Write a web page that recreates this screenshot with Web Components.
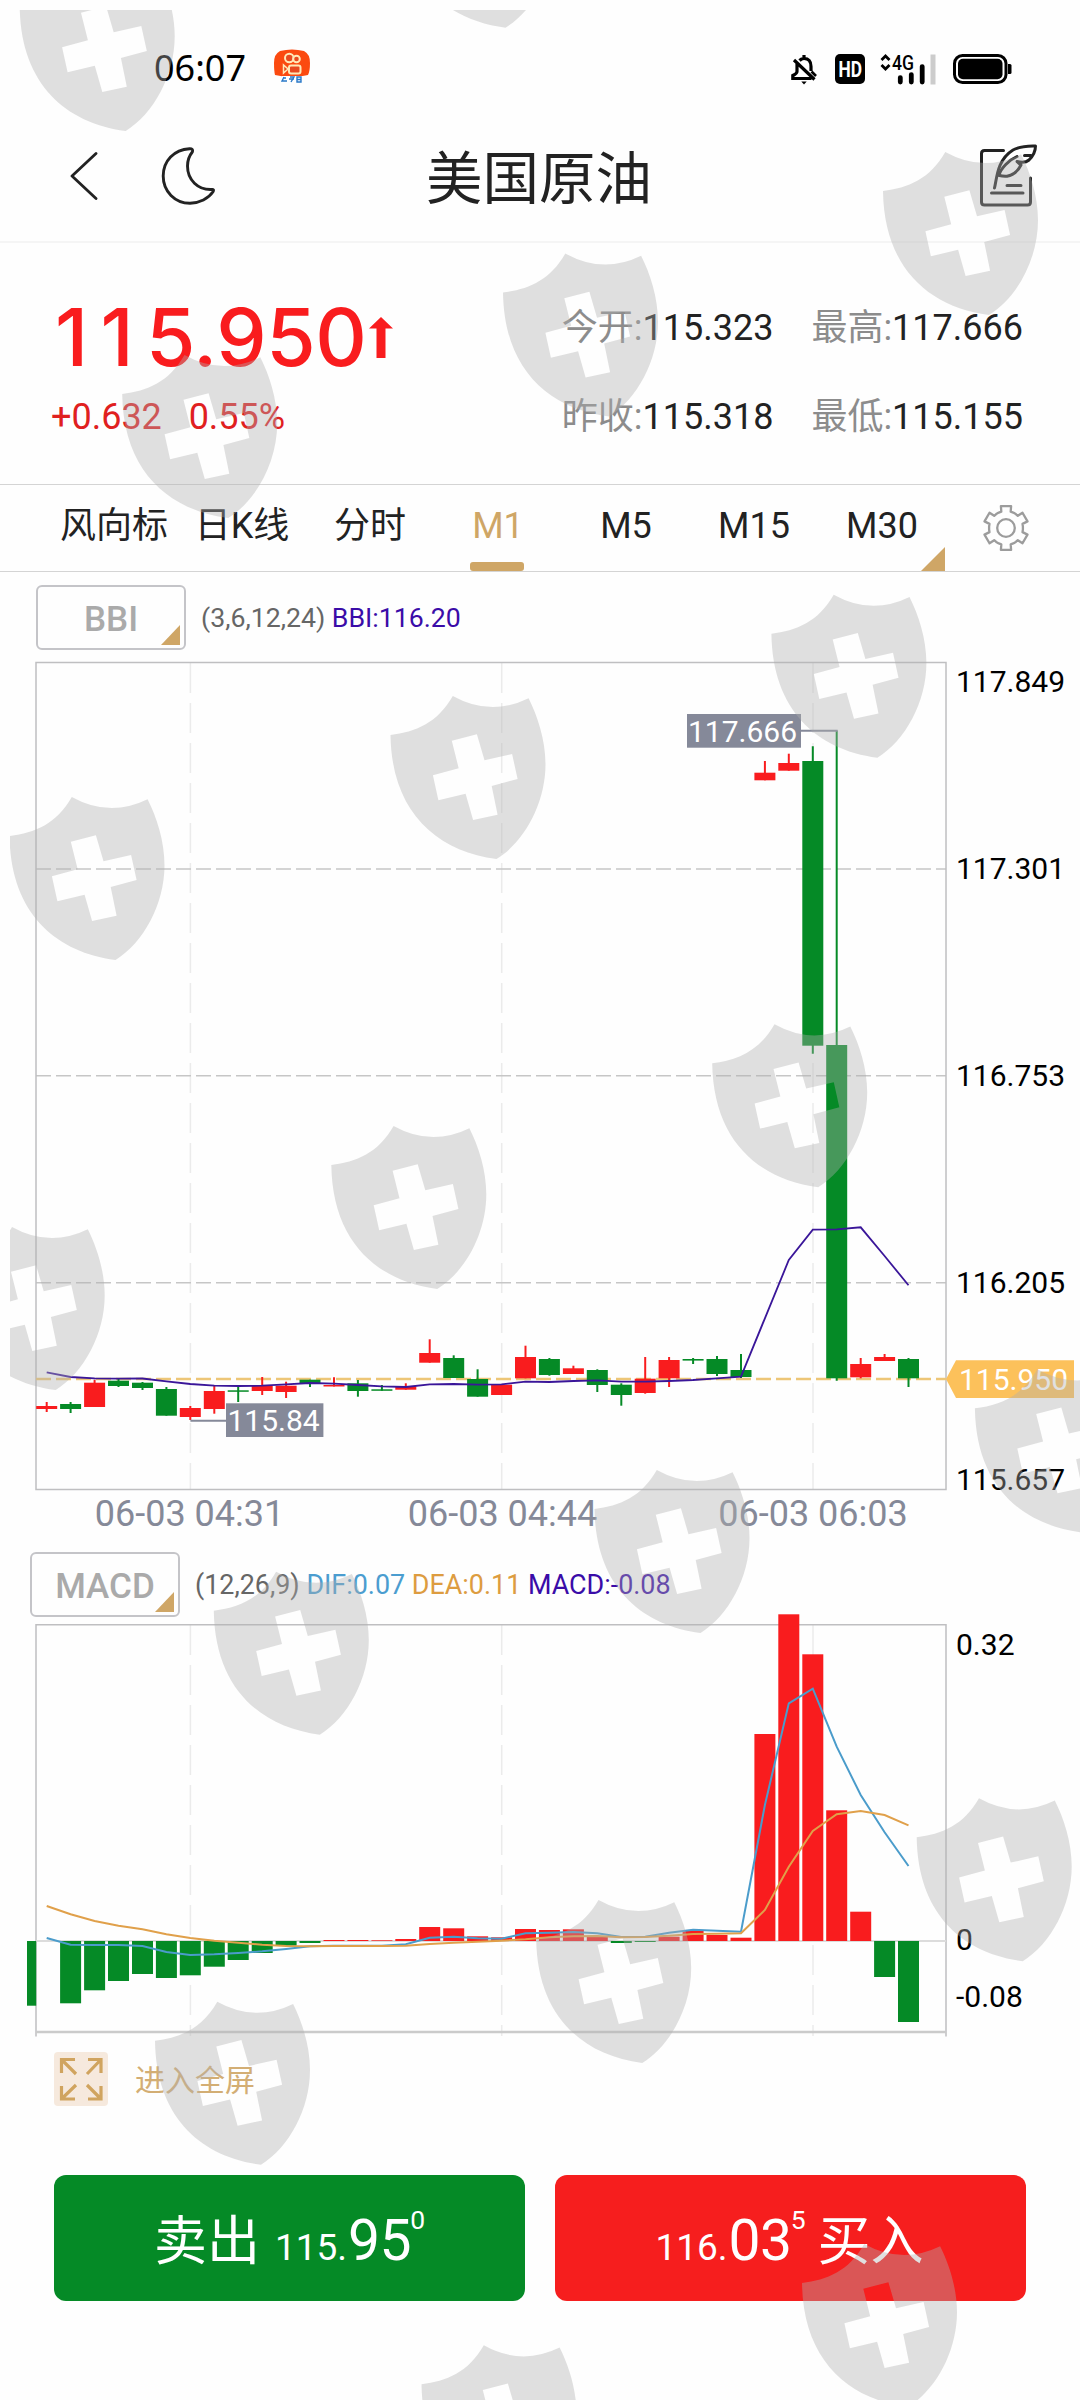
<!DOCTYPE html>
<html lang="zh-CN">
<head>
<meta charset="utf-8">
<title>美国原油</title>
<style>
    body{
        margin: 0;
        background: #fefefe;
        font-family: Roboto, "Noto Sans CJK SC", sans-serif;
        color: #222;
    }
</style>
</head>
<body>
<quote-app></quote-app>

<script>
/**
 * Shared colors of the quote screen.
 */
const RED = '#f91c1e';
const GREEN = '#058a26';
const GOLD = '#cfa666';

/** Horizontal step between two candles and center of the first one. */
const STEP = 23.94;
const FIRST = 46.7;

/**
 * Turns a list of y values into svg polyline points.
 *
 * @param {number[]} values
 * @returns {string}
 */
const toPoints = (values) => values.map((y, i) => `${(FIRST + i * STEP).toFixed(1)},${y}`).join(' ');

/**
 * Phone status bar.
 *
 * @customElement
 */
class StatusBar extends HTMLElement{
    constructor(){
        super();
        this.attachShadow({mode: 'open'});
    }

    connectedCallback(){
        this.shadowRoot.innerHTML = `
            <style>
                :host{
                    display: flex;
                    align-items: center;
                    height: 94px;
                    padding: 22px 67px 0 154px;
                    color: #000;
                }
                .time{
                    font: 36px/44px "Noto Sans", sans-serif;
                    margin-top: -3px;
                }
                .app{
                    margin: -4px auto 0 27px;
                }
                .bell{ margin-right: 18px; }
                .hd{ margin-right: 15px; }
                .net{ margin-right: 16px; }
                svg{
                    display: block;
                    overflow: visible;
                    font-family: Roboto, sans-serif;
                }
            </style>
            <span class="time">06:07</span>
            <svg class="app" width="38" height="36" viewBox="0 0 38 36">
                <path d="M7 2Q19-1 31 2Q37 5 37 14Q37 22 35 26Q19 30 2 26Q1 22 1 14Q1 5 7 2z" fill="#fb4a10"/>
                <circle cx="16.300" cy="9" r="4.300" fill="#e84a20" stroke="#ffe9b8" stroke-width="2"/>
                <circle cx="23.500" cy="10" r="3.300" fill="#e84a20" stroke="#ffe9b8" stroke-width="2"/>
                <rect x="16" y="16.500" width="11.500" height="8" rx="2" fill="#e84a20" stroke="#ffe9b8" stroke-width="2"/>
                <path d="M10.500 16v8l4.500-4z" fill="#e84a20" stroke="#ffe9b8" stroke-width="1.500"/>
                <path d="M9 27h20v6H9z" fill="#fff"/>
                <path d="M11 28l-2 4h5M10 29h3M17 28h4l-3 5M16 30h5M24 28v5h4v-5zM24 30.500h4" fill="none" stroke="#2878c8" stroke-width="1.400"/>
            </svg>
            <svg class="bell" width="26" height="31" viewBox="0 0 26 31" fill="none" stroke="#000" stroke-width="3.200">
                <path d="M6 9.500V17.500Q6 19.500 1.800 21.500V24.500H20.500M8.500 6.500Q10.500 4.500 13 4.500Q20 4.500 20 12.500V17M13 1V5M3 6L23.500 25.500"/>
                <path d="M10.300 27.500h5.400l-2.700 3z" fill="#000" stroke="none"/>
                <path d="M20.500 17.500L25 22" stroke-width="2.600"/>
            </svg>
            <svg class="hd" width="30" height="30" viewBox="0 0 30 30">
                <rect width="30" height="30" rx="5" fill="#000"/>
                <text x="3.500" y="23.200" fill="#fff" font-size="22.500" font-weight="700" textLength="23.500" lengthAdjust="spacingAndGlyphs">HD</text>
            </svg>
            <svg class="net" width="57" height="31" viewBox="0 0 57 31">
                <path d="M1.500 6L5.500 2L9.500 6M1.500 11L5.500 15L9.500 11" fill="none" stroke="#000" stroke-width="2.800"/>
                <text x="12" y="15.500" font-size="19.500" font-weight="500" textLength="22" lengthAdjust="spacingAndGlyphs">4G</text>
                <path d="M20.300 23.600V28M31.300 20.600V28M42.200 12.600V28" stroke="#000" stroke-width="4.800" stroke-linecap="round"/>
                <path d="M53 .5V30.500" stroke="#ccc" stroke-width="5"/>
            </svg>
            <svg width="60" height="30" viewBox="0 0 60 30">
                <rect x="1.500" y="1.500" width="51.500" height="27" rx="8" fill="none" stroke="#000" stroke-width="3"/>
                <rect x="5" y="4.800" width="44.500" height="20.400" rx="5" fill="#000"/>
                <path d="M55 10h2q1.500 0 1.500 1.500v7q0 1.500-1.500 1.500h-2z" fill="#000"/>
            </svg>
        `;
    }
}

customElements.define('status-bar', StatusBar)

/**
 * Navigation header. The title comes in through the slot.
 *
 * @customElement
 */
class NavHeader extends HTMLElement{
    constructor(){
        super();
        this.attachShadow({mode: 'open'});
    }

    connectedCallback(){
        this.shadowRoot.innerHTML = `
            <style>
                :host{
                    display: grid;
                    grid-template-columns: 1fr auto 1fr;
                    align-items: center;
                    height: 120px;
                    padding: 0 43px 5px 70px;
                    border-bottom: 2px solid #f5f5f5;
                }
                .left{
                    display: flex;
                    align-items: center;
                    gap: 63px;
                }
                h1{
                    margin: 8px 0 0 -29px;
                    font-size: 56.5px;
                    font-weight: 400;
                    line-height: 64px;
                }
                .edit{ justify-self: end; }
                svg{
                    display: block;
                    fill: none;
                    stroke: #222;
                    stroke-linecap: round;
                    stroke-linejoin: round;
                }
            </style>
            <div class="left">
                <svg width="28" height="48" viewBox="0 0 28 48" stroke-width="2.800"><path d="M26 1.500L2 24L26 46.500"/></svg>
                <svg width="54" height="58" viewBox="0 0 54 58" stroke-width="2.900"><path d="M28.500 1.700C13 2.500 2.200 14 2.200 29C2.200 44.500 14 56.200 29 56.200C38.500 56.200 47.500 51.500 52 44.800Q53.500 42 50.500 42.500C37 43 26.500 33 26.500 19C26.500 13 28.500 8.500 31.300 5Q32.500 1.500 28.500 1.700z"/></svg>
            </div>
            <h1><slot></slot></h1>
            <svg class="edit" width="58" height="64" viewBox="0 0 58 64" stroke-width="3">
                <path d="M24.500 6.500H5.500Q2.500 6.500 2.500 9.500V58Q2.500 61 5.500 61H48.500Q51.500 61 51.500 58V34"/>
                <path d="M15.500 44C18 34 18 16 34 6C41 2.300 50 1.800 56.500 2C56.500 8 53 13 50 16Q46 19.500 38 17.500L42 21C39 27 35 31 28 32.200Q24 32.500 20.500 31.500"/>
                <path d="M20 31C22 24 30 16 38 12.500M45.500 11.500H52M28 41.500H42M12.500 49H44"/>
            </svg>
        `;
    }
}

customElements.define('nav-header', NavHeader)

/**
 * One label:value pair of the quote summary.
 *
 * @customElement
 */
class QuoteStat extends HTMLElement{
    constructor(){
        super();
        this.attachShadow({mode: 'open'});
    }

    connectedCallback(){
        this.shadowRoot.innerHTML = `
            <style>
                :host{
                    display: block;
                    font-size: 36px;
                    line-height: 44px;
                    white-space: nowrap;
                }
                span{ color: #8c8c8c; }
            </style>
            <span>${this.getAttribute('label')}:</span><slot></slot>
        `;
    }
}

customElements.define('quote-stat', QuoteStat)

/**
 * Last price, change and the day's values.
 *
 * @customElement
 */
class QuoteSummary extends HTMLElement{
    constructor(){
        super();
        this.attachShadow({mode: 'open'});
    }

    connectedCallback(){
        this.shadowRoot.innerHTML = `
            <style>
                :host{
                    display: flex;
                    justify-content: space-between;
                    height: 187px;
                    padding: 54px 57px 0 51px;
                    border-bottom: 1px solid #d4d4d4;
                }
                .price{
                    display: flex;
                    align-items: center;
                    color: ${RED};
                    font: 500 80px/80px Inter, sans-serif;
                    letter-spacing: -.4px;
                    margin: 0 0 18px 4px;
                }
                .ones{ letter-spacing: 12.3px; }
                .price svg{ margin-left: 3px; }
                .change{
                    color: #e0201f;
                    font-size: 36px;
                    line-height: 44px;
                    white-space: pre;
                }
                .stats{
                    display: grid;
                    grid-template-columns: auto auto;
                    align-content: start;
                    gap: 45px 38px;
                    padding-top: 9px;
                }
            </style>
            <div>
                <div class="price"><div><span class="ones">11</span>5.950</div><svg width="24" height="41" viewBox="0 0 24 41"><path d="M12 0L24 11.500H16.500V41H7.500V11.500H0z" fill="${RED}"/></svg></div>
                <div class="change">+0.632   0.55%</div>
            </div>
            <div class="stats">
                <quote-stat label="今开">115.323</quote-stat>
                <quote-stat label="最高">117.666</quote-stat>
                <quote-stat label="昨收">115.318</quote-stat>
                <quote-stat label="最低">115.155</quote-stat>
            </div>
        `;
    }
}

customElements.define('quote-summary', QuoteSummary)

/**
 * Period tabs with the settings icon.
 *
 * @customElement
 */
class PeriodTabs extends HTMLElement{
    constructor(){
        super();
        this.attachShadow({mode: 'open'});
        /** @type {string[]} */
        this.periods = ['风向标', '日K线', '分时', 'M1', 'M5', 'M15', 'M30'];
        /** @type {string} */
        this.active = 'M1';
    }

    /**
     * Outline of the gear: six teeth round the center.
     *
     * @returns {string}
     */
    gearPath(){
        const points = [];
        for (let i = 0; i < 6; i++) {
            [[-25, 17], [-16, 17], [-13, 22.500], [13, 22.500], [16, 17], [25, 17]].forEach(([deg, r]) => {
                const a = (i * 60 + deg - 90) * Math.PI / 180;
                points.push(`${(24 + r * Math.cos(a)).toFixed(1)} ${(24 + r * Math.sin(a)).toFixed(1)}`);
            });
        }
        return `M${points.join('L')}z`;
    }

    connectedCallback(){
        const tabs = this.periods.map((name) => `<div class="tab${name === this.active ? ' active' : ''}">${name}</div>`).join('');
        this.shadowRoot.innerHTML = `
            <style>
                :host{
                    display: flex;
                    height: 86px;
                    padding-left: 50px;
                    border-bottom: 1px solid #d4d4d4;
                }
                .tab{
                    position: relative;
                    width: 128px;
                    font-size: 36px;
                    line-height: 82px;
                    text-align: center;
                    white-space: nowrap;
                }
                .active{ color: ${GOLD}; }
                .active::after{
                    content: '';
                    position: absolute;
                    left: 36px;
                    bottom: 0;
                    width: 54px;
                    height: 9px;
                    border-radius: 3px;
                    background: ${GOLD};
                }
                .tab:last-of-type::after{
                    content: '';
                    position: absolute;
                    right: 1px;
                    bottom: 0;
                    border-left: 24px solid transparent;
                    border-bottom: 24px solid ${GOLD};
                }
                svg{
                    margin: 19px 0 0 36px;
                }
            </style>
            ${tabs}
            <svg width="48" height="48" viewBox="0 0 48 48" fill="none" stroke="#9c9c9c" stroke-width="2.300" stroke-linejoin="round">
                <path d="${this.gearPath()}"/>
                <circle cx="24" cy="24" r="8.800"/>
            </svg>
        `;
    }
}

customElements.define('period-tabs', PeriodTabs)

/**
 * Indicator selector followed by its parameters (slot).
 *
 * @customElement
 */
class IndicatorBar extends HTMLElement{
    constructor(){
        super();
        this.attachShadow({mode: 'open'});
    }

    connectedCallback(){
        this.shadowRoot.innerHTML = `
            <style>
                :host{
                    display: flex;
                    align-items: center;
                    height: 65px;
                    font-size: 26.7px;
                    line-height: 36px;
                    color: #666;
                    white-space: pre;
                }
                .select{
                    position: relative;
                    box-sizing: border-box;
                    width: 150px;
                    height: 65px;
                    margin-right: 15px;
                    border: 2px solid #c4c4c8;
                    border-radius: 6px;
                    color: #aaa;
                    font-size: 35px;
                    font-weight: 500;
                    line-height: 65px;
                    text-align: center;
                }
                .select::after{
                    content: '';
                    position: absolute;
                    right: 4px;
                    bottom: 3px;
                    border-left: 19px solid transparent;
                    border-bottom: 20px solid ${GOLD};
                }
            </style>
            <div class="select">${this.getAttribute('name')}</div><div><slot></slot></div>
        `;
    }
}

customElements.define('indicator-bar', IndicatorBar)

/** Rules used by both charts. */
const chartStyle = `
    :host{ display: block; }
    svg{
        display: block;
        overflow: visible;
        font-family: Roboto, sans-serif;
        font-size: 30px;
    }
    line, polyline{ fill: none; }
    .frame{ stroke: #bfbfc1; stroke-width: 1.500; }
    .grid{ stroke: #c6c6c6; stroke-width: 1.500; stroke-dasharray: 15 5; }
    .vgrid{ stroke: #ebebeb; stroke-width: 1.500; stroke-dasharray: 30 10; }
    .axis{ fill: #000; }
`;

/**
 * Candlestick chart with the BBI line.
 *
 * @customElement
 */
class CandleChart extends HTMLElement{
    constructor(){
        super();
        this.attachShadow({mode: 'open'});
        /**
         * Candles: up (1) or down (0), body top, body bottom, wick top, wick bottom.
         */
        this.candles = [
            [1, 1406, 1409, 1402, 1412], [0, 1404, 1409, 1402, 1413], [1, 1382.7, 1407, 1379.7, 1407],
            [0, 1380.7, 1386, 1379, 1387], [0, 1382.7, 1388, 1382, 1390], [0, 1389, 1415.7, 1387, 1415.7],
            [1, 1408, 1417, 1406, 1420], [1, 1391, 1409, 1385.7, 1413.7], [0, 1390.3, 1391.8, 1386, 1402],
            [1, 1386, 1391, 1377, 1395], [1, 1385.7, 1392, 1381.7, 1398], [0, 1379.7, 1383.3, 1379.7, 1387],
            [1, 1385, 1386.5, 1377.3, 1386.5], [0, 1383.3, 1391, 1380, 1396.7], [0, 1389.3, 1390.8, 1385, 1390.8],
            [1, 1386.3, 1389.7, 1383.3, 1389.7], [1, 1353, 1362.7, 1339.3, 1362.7], [0, 1358, 1378, 1355.3, 1378],
            [0, 1379, 1396.7, 1369.3, 1396.7], [1, 1384.7, 1395, 1384.7, 1395], [1, 1357, 1378.3, 1345.7, 1378.3],
            [0, 1359, 1375, 1358, 1375.7], [1, 1368.3, 1374, 1365.7, 1374], [0, 1370, 1385, 1369.3, 1392],
            [0, 1384.7, 1395, 1383.3, 1405.7], [1, 1378.7, 1393, 1357, 1393.7], [1, 1360, 1378.3, 1357, 1387],
            [0, 1359, 1360.6, 1358, 1364], [0, 1359, 1374, 1356, 1376], [0, 1370, 1377, 1354, 1378],
            [1, 772.7, 780.3, 761, 780.3], [1, 763, 770.7, 753.7, 770.7], [0, 761, 1045.7, 746.3, 1053.7],
            [0, 1045, 1378.3, 730.7, 1380.7], [1, 1364, 1377.3, 1358, 1378.3], [1, 1357, 1361, 1354, 1361],
            [0, 1359, 1378.3, 1358, 1387]
        ];
        this.bbi = [
            1372.3, 1377, 1378.3, 1378.7, 1378.5, 1381.3, 1384, 1385.7, 1386, 1385.7, 1384.3, 1383, 1383.7,
            1385, 1386.3, 1387, 1384.3, 1384, 1384.7, 1384.3, 1381.7, 1382, 1381, 1380.3, 1381.7, 1381.7,
            1381, 1380, 1378.3, 1376.7, 1318.3, 1260, 1229.7, 1229.3, 1227.3, 1256, 1285.3
        ];
    }

    /**
     * @returns {string} svg of all candles
     */
    drawCandles(){
        return this.candles.map(([up, top, bottom, high, low], i) => {
            const x = FIRST + i * STEP;
            const color = up ? RED : GREEN;
            return `<path d="M${x.toFixed(1)} ${high}V${low}" stroke="${color}" stroke-width="2"/>
                <rect x="${(x - 10.500).toFixed(1)}" y="${top}" width="21" height="${(bottom - top).toFixed(1)}" fill="${color}"/>`;
        }).join('');
    }

    connectedCallback(){
        const labels = [[692, '117.849'], [879, '117.301'], [1085.700, '116.753'], [1293, '116.205'], [1490, '115.657']];
        const times = [[189.500, '06-03 04:31'], [502.500, '06-03 04:44'], [813, '06-03 06:03']];
        this.shadowRoot.innerHTML = `
            <style>
                ${chartStyle}
                .last{ stroke: #edc677; stroke-width: 2.500; stroke-dasharray: 15 5; }
                .bbi{ stroke: #3a1699; stroke-width: 1.800; }
                .tag{ fill: #858999; }
                .lead{ stroke: #858999; stroke-width: 2; }
                .white{ fill: #fff; }
                .time{ fill: #858998; font-size: 36px; text-anchor: middle; }
            </style>
            <svg width="1080" height="890" viewBox="0 650 1080 890">
                ${[190.400, 501.700, 813].map((x) => `<line class="vgrid" x1="${x}" x2="${x}" y1="663" y2="1489"/>`).join('')}
                ${[869, 1075.700, 1282.700].map((y) => `<line class="grid" x1="36" x2="946" y1="${y}" y2="${y}"/>`).join('')}
                <rect class="frame" x="36" y="662.500" width="910" height="827" fill="none"/>
                <line class="last" x1="36" x2="946" y1="1379" y2="1379"/>
                ${this.drawCandles()}
                <polyline class="bbi" points="${toPoints(this.bbi)}"/>
                <path class="lead" d="M800 730.700H837.700M190.400 1420.700H227"/>
                <rect class="tag" x="687" y="714" width="114" height="33.700"/>
                <text class="white" x="688" y="741.500">117.666</text>
                <rect class="tag" x="226" y="1403.300" width="97.400" height="33.700"/>
                <text class="white" x="227.500" y="1431">115.84</text>
                ${labels.map(([y, text]) => `<text class="axis" x="956" y="${y}">${text}</text>`).join('')}
                <path d="M946 1379L956 1360.300H1074V1398H956z" fill="#fcc15b"/>
                <text class="white" x="959" y="1390">115.950</text>
                ${times.map(([x, text]) => `<text class="time" x="${x}" y="1526">${text}</text>`).join('')}
            </svg>
        `;
    }
}

customElements.define('candle-chart', CandleChart)

/**
 * MACD histogram with DIF and DEA lines.
 *
 * @customElement
 */
class MacdChart extends HTMLElement{
    constructor(){
        super();
        this.attachShadow({mode: 'open'});
        /** y of the zero line */
        this.zero = 1941;
        /** End of each bar. Above zero is red, below is green. */
        this.bars = [
            1941, 2003.3, 1990.3, 1981, 1974, 1978, 1975.3, 1966.7, 1960, 1953, 1945.7, 1943, 1940, 1940, 1940.3,
            1939, 1927, 1928.3, 1936.3, 1937.3, 1929, 1930, 1929.3, 1937, 1943, 1942, 1936.7, 1931, 1935, 1937.7,
            1734, 1614.3, 1654.3, 1810.3, 1911.7, 1977, 2022
        ];
        this.dif = [
            1938, 1944.7, 1945, 1945, 1946, 1952, 1955, 1954.3, 1953, 1951.3, 1949, 1946.3, 1945.7, 1945.7, 1945.7,
            1944.3, 1937.7, 1936.7, 1938.3, 1938.7, 1933.3, 1932.7, 1932, 1933.3, 1937, 1936.7, 1932.7, 1929.7,
            1930.7, 1931.7, 1805, 1703.3, 1688.7, 1746.7, 1795, 1832.3, 1866
        ];
        this.dea = [
            1906, 1914.3, 1921, 1925.7, 1929.3, 1934.3, 1938, 1940.7, 1942.7, 1944.7, 1946, 1946.3, 1946, 1946, 1946,
            1945.7, 1944, 1942.7, 1941.7, 1940.7, 1939.3, 1937.3, 1936.3, 1936, 1937.3, 1937, 1935.7, 1934, 1933.7,
            1933.3, 1910, 1866.7, 1831, 1814.3, 1811, 1815, 1825.3
        ];
    }

    /**
     * @returns {string} svg of the histogram
     */
    drawBars(){
        return this.bars.map((y, i) => {
            const x = (FIRST + i * STEP - 10.5).toFixed(1);
            const top = Math.min(y, this.zero);
            return `<rect x="${x}" y="${top}" width="21" height="${Math.abs(y - this.zero).toFixed(1)}" fill="${y < this.zero ? RED : GREEN}"/>`;
        }).join('');
    }

    connectedCallback(){
        this.shadowRoot.innerHTML = `
            <style>
                ${chartStyle}
                .dif{ stroke: #4b9ccb; stroke-width: 2; }
                .dea{ stroke: #e0a04a; stroke-width: 2; }
                .zero{ stroke: #dcdcdc; stroke-width: 2; }
                .bottom{ stroke: #cbcbcb; stroke-width: 2.500; }
            </style>
            <svg width="1080" height="423" viewBox="0 1617 1080 423">
                ${[190.400, 501.700, 813].map((x) => `<line class="vgrid" x1="${x}" x2="${x}" y1="1625" y2="2036"/>`).join('')}
                <path class="frame" d="M36 2036.500V1624.700H946V2036.500" fill="none"/>
                <line class="bottom" x1="36" x2="946" y1="2032" y2="2032"/>
                <line class="zero" x1="36" x2="946" y1="1941" y2="1941"/>
                <rect x="27" y="1941" width="9.200" height="64.700" fill="${GREEN}"/>
                ${this.drawBars()}
                <polyline class="dif" points="${toPoints(this.dif)}"/>
                <polyline class="dea" points="${toPoints(this.dea)}"/>
                <text class="axis" x="956" y="1655">0.32</text>
                <text class="axis" x="956" y="1950">0</text>
                <text class="axis" x="956" y="2007">-0.08</text>
            </svg>
        `;
    }
}

customElements.define('macd-chart', MacdChart)

/**
 * Link that opens the chart in full screen.
 *
 * @customElement
 */
class FullscreenLink extends HTMLElement{
    constructor(){
        super();
        this.attachShadow({mode: 'open'});
    }

    connectedCallback(){
        this.shadowRoot.innerHTML = `
            <style>
                :host{
                    display: flex;
                    align-items: center;
                    gap: 27px;
                    padding: 12px 54px 0;
                    color: #d3ae74;
                    font-size: 30px;
                    line-height: 40px;
                }
                svg{
                    border-radius: 4px;
                    background: #f6e9dd;
                }
                span{ margin-top: 3px; }
            </style>
            <svg width="54" height="54" viewBox="0 0 54 54" fill="none" stroke="#d0a45f" stroke-width="3.200">
                <path d="M7.500 21V7.500H21M7.500 7.500L22 22M34 7.500H47V21M47 7.500L33 22M7.500 34V47H21M7.500 47L22 33M34 47H47V34M47 47L33 33"/>
            </svg>
            <span><slot></slot></span>
        `;
    }
}

customElements.define('fullscreen-link', FullscreenLink)

/**
 * Trade button. type="sell" or type="buy".
 *
 * @customElement
 */
class TradeButton extends HTMLElement{
    constructor(){
        super();
        this.attachShadow({mode: 'open'});
    }

    connectedCallback(){
        const sell = this.getAttribute('type') === 'sell';
        const [small, big, sup] = this.getAttribute('price').split('|');
        const price = `<span class="price">${small}<b>${big}</b><i>${sup}</i></span>`;
        this.shadowRoot.innerHTML = `
            <style>
                :host{
                    display: flex;
                    flex: 1;
                    align-items: baseline;
                    justify-content: center;
                    height: 126px;
                    border-radius: 12px;
                    background: ${sell ? GREEN : '#f61e1e'};
                    color: #fff;
                    font-size: 53px;
                    line-height: 134px;
                }
                .price{
                    font-size: 37px;
                    margin: ${sell ? '0 0 0 15px' : '0 12px 0 -2px'};
                }
                b, i{
                    font-weight: 400;
                    font-style: normal;
                    line-height: 1;
                }
                b{
                    font-size: 57px;
                    letter-spacing: -.5px;
                    margin-left: 1px;
                }
                i{
                    position: relative;
                    top: -31px;
                    font-size: 26.5px;
                    margin-left: -1px;
                }
            </style>
            ${sell ? '<slot></slot>' + price : price + '<slot></slot>'}
        `;
    }
}

customElements.define('trade-button', TradeButton)

/**
 * Shields laid over the whole screen.
 *
 * @customElement
 */
class ShieldOverlay extends HTMLElement{
    constructor(){
        super();
        this.attachShadow({mode: 'open'});
        /** Left corner of each shield. */
        this.spots = [
            [19.7, 7], [399.5, -96.3], [883, 191], [503, 292.5], [122.2, 394], [771.4, 633.7], [390.5, 735],
            [9.500, 836], [712.2, 1063.3], [331.3, 1165], [-50.3, 1266], [974.9, 1408.3], [594.500, 1509],
            [213.8, 1610.7], [916.7, 1837.3], [536.2, 1939], [155, 2040.7], [802, 2283], [421.5, 2384.3]
        ];
    }

    connectedCallback(){
        this.shadowRoot.innerHTML = `
            <style>
                :host{
                    position: absolute;
                    inset: 0;
                    overflow: hidden;
                    pointer-events: none;
                }
                svg{ display: block; }
            </style>
            <svg width="1080" height="2400" viewBox="0 0 1080 2400">
                <defs>
                    <clipPath id="area"><rect x="10" y="10" width="1070" height="2390"/></clipPath>
                    <path id="shield" fill-rule="evenodd" d="M0 0C25-3 47-12 62.300-39Q100-18 138.100-36.700C147-19 155 5 155 29.300C155 68 134 107 106 124C45 116 1 76 0 0z
                        M61.300 5.700L86.400-.7L94 25.300L121.600 19L127.100 44L101.200 51L107.100 79.700L82.600 85L75.100 58.700L47.900 65.300L42.400 40.300L68.200 33.300z"/>
                </defs>
                <g clip-path="url(#area)" fill="#b0b0b0" fill-opacity=".39">
                    ${this.spots.map(([x, y]) => `<use href="#shield" x="${x}" y="${y}"/>`).join('')}
                </g>
            </svg>
        `;
    }
}

customElements.define('shield-overlay', ShieldOverlay)

/**
 * Root of the quote screen.
 *
 * @customElement
 */
class QuoteApp extends HTMLElement{
    constructor(){
        super();
        this.attachShadow({mode: 'open'});
    }

    connectedCallback(){
        const style = `
            <style>
                :host{
                    display: block;
                    position: relative;
                    width: 1080px;
                    height: 2400px;
                    overflow: hidden;
                }
                .bbi{ margin: 13px 0 0 36px; }
                .macd{
                    margin: 12px 0 0 30px;
                    font-size: 26.9px;
                }
                .purple{ color: #3a0ca8; }
                .blue{ color: #4b9dd0; }
                .orange{ color: #dd9c40; }
                .actions{
                    display: flex;
                    gap: 30px;
                    padding: 69px 54px 0;
                }
            </style>
        `
        const template = `
            <status-bar></status-bar>
            <nav-header>美国原油</nav-header>
            <quote-summary></quote-summary>
            <period-tabs></period-tabs>
            <indicator-bar class="bbi" name="BBI">(3,6,12,24) <span class="purple">BBI:116.20</span></indicator-bar>
            <candle-chart></candle-chart>
            <indicator-bar class="macd" name="MACD">(12,26,9) <span class="blue">DIF:0.07</span> <span class="orange">DEA:0.11</span> <span class="purple">MACD:-0.08</span></indicator-bar>
            <macd-chart></macd-chart>
            <fullscreen-link>进入全屏</fullscreen-link>
            <div class="actions">
                <trade-button type="sell" price="115.|95|0">卖出</trade-button>
                <trade-button type="buy" price="116.|03|5">买入</trade-button>
            </div>
            <shield-overlay></shield-overlay>
        `
        this.shadowRoot.innerHTML = style + template
    }
}

customElements.define('quote-app', QuoteApp)
</script>
</body>
</html>
